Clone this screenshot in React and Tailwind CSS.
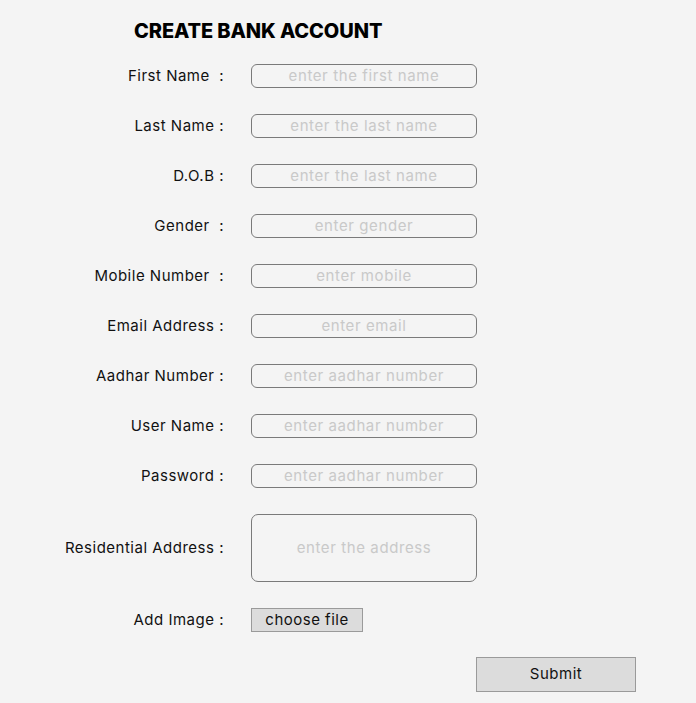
import React from "react";

const rows = [
  ["First Name  :", "enter the first name"],
  ["Last Name :", "enter the last name"],
  ["D.O.B :", "enter the last name"],
  ["Gender  :", "enter gender"],
  ["Mobile Number  :", "enter mobile"],
  ["Email Address :", "enter email"],
  ["Aadhar Number :", "enter aadhar number"],
  ["User Name :", "enter aadhar number"],
  ["Password :", "enter aadhar number"],
];

export default function App() {
  return (
    <div
      className="min-h-[703px] w-[696px] bg-[#f4f4f4] text-[#111] pt-[18px]"
      style={{ fontFamily: "Inter, 'Noto Sans', sans-serif" }}
    >
      <h1 className="ml-[134px] text-[20px] font-extrabold leading-[26px] tracking-[-0.1px] text-black">
        CREATE BANK ACCOUNT
      </h1>
      <div className="mt-[20px] flex flex-col gap-[26px]">
        {rows.map(([label, ph], i) => (
          <div key={i} className="flex items-center">
            <div className="w-[224px] text-right text-[15px] tracking-[0.5px] leading-[24px] whitespace-pre">
              {label}
            </div>
            <div className="ml-[27px] flex h-[24px] w-[226px] items-center justify-center rounded-[6px] border border-[#7a7a7a] text-[15px] tracking-[0.6px] text-[#c9c9c9]">
              {ph}
            </div>
          </div>
        ))}
        <div className="flex items-center">
          <div className="w-[224px] text-right text-[15px] tracking-[0.5px] leading-[24px] whitespace-pre">
            Residential Address :
          </div>
          <div className="ml-[27px] flex h-[68px] w-[226px] items-center justify-center rounded-[7px] border border-[#7a7a7a] text-[15px] tracking-[0.6px] text-[#c9c9c9]">
            enter the address
          </div>
        </div>
        <div className="flex items-center">
          <div className="w-[224px] text-right text-[15px] tracking-[0.5px] leading-[24px] whitespace-pre">
            Add Image :
          </div>
          <div className="ml-[27px] flex h-[24px] w-[112px] items-center justify-center border border-[#9a9a9a] bg-[#dcdcdc] text-[15px] tracking-[0.5px] text-[#111]">
            choose file
          </div>
        </div>
      </div>
      <div className="ml-[476px] mt-[25px] flex h-[35px] w-[160px] items-center justify-center border border-[#9a9a9a] bg-[#dcdcdc] text-[15px] tracking-[0.5px] text-[#111]">
        Submit
      </div>
    </div>
  );
}
